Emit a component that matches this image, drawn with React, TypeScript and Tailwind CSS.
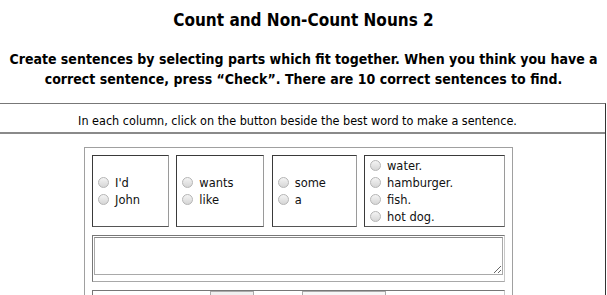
import React from "react";

const columns: string[][] = [
  ["I'd", "John"],
  ["wants", "like"],
  ["some", "a"],
  ["water.", "hamburger.", "fish.", "hot dog."],
];

const widths = ["w-[77px]", "w-[88px]", "w-[85px]", "w-[141px]"];

function Radio() {
  return (
    <span className="inline-block w-[11px] h-[11px] rounded-full border border-[#b5b5b5] bg-gradient-to-b from-[#f4f4f4] to-[#d6d6d6] shrink-0" />
  );
}

function WordColumn({ words, width }: { words: string[]; width: string }) {
  return (
    <div
      className={`${width} h-[72px] flex flex-col justify-center border border-t-[#3a3a3a] border-l-[#3a3a3a] border-r-[#9a9a9a] border-b-[#555]`}
    >
      {words.map((w) => (
        <label key={w} className="flex items-center h-[17px] pl-[5px] gap-[6px] text-[12.75px] text-[#111]">
          <Radio />
          <span>{w}</span>
        </label>
      ))}
    </div>
  );
}

export default function App() {
  return (
    <div className="w-[607px] h-[295px] overflow-hidden bg-white font-['DejaVu_Sans_Condensed','DejaVu_Sans',sans-serif] text-black">
      <h1 className="pt-[9px] text-center text-[17px] leading-[22px] font-bold">
        Count and Non-Count Nouns 2
      </h1>
      <p className="mt-[18px] text-center text-[14px] leading-[20px] font-bold whitespace-nowrap">
        Create sentences by selecting parts which fit together. When you think you have a
        <br />
        correct sentence, press “Check”. There are 10 correct sentences to find.
      </p>

      <div className="mt-[14px] w-[606px] border-t border-r border-t-[#777] border-r-[#333] h-[200px]">
        <div className="h-[30px] pt-[6px] pr-[10px] flex items-center justify-center text-[12.5px] border-b-2 border-b-[#8a8a8a]">
          In each column, click on the button beside the best word to make a sentence.
        </div>

        <div className="pt-[13px] pl-[84px]">
          <div className="w-[429px] border border-[#a0a0a0] p-[7px] flex flex-col gap-[8px]">
            <div className="flex justify-between">
              {columns.map((c, i) => (
                <WordColumn key={i} words={c} width={widths[i]} />
              ))}
            </div>

            <div className="h-[47px] border border-t-[#777] border-l-[#777] border-r-[#c8c8c8] border-b-[#a8a8a8] p-[1px]">
              <textarea className="block w-full h-[38px] resize border border-[#a9a9a9] border-t-[#888] outline-none text-[11px]" />
            </div>

            <div className="h-[30px] border border-t-[#777] border-l-[#777] border-r-[#c8c8c8] border-b-[#a8a8a8]">
              <div className="flex">
                <div className="w-[117px]" />
                <div className="w-[44px] h-[20px] border border-[#aaa] bg-[#f0f0f0]" />
                <div className="w-[48px]" />
                <div className="w-[84px] h-[20px] border border-[#aaa] bg-[#f7f7f7]" />
              </div>
            </div>
          </div>
        </div>
      </div>
    </div>
  );
}
